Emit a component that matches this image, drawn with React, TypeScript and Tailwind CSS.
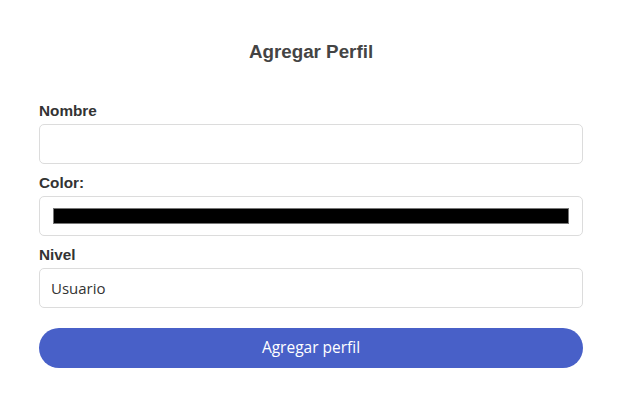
import { useState } from 'react';

export default function App() {
  const [nombre, setNombre] = useState('');

  return (
    <div className="min-h-screen bg-white font-['Liberation_Sans',Arial,sans-serif]">
      <form className="w-[544px] mx-auto pt-[41px]" onSubmit={(e) => e.preventDefault()}>
        <h2 className="text-center text-[18.8px] leading-[22px] font-bold text-[#444444] mb-[39px]">
          Agregar Perfil
        </h2>

        <label className="block text-[15.3px] leading-[18px] font-bold text-[#333333] mb-[4px]">Nombre</label>
        <input
          value={nombre}
          onChange={(e) => setNombre(e.target.value)}
          className="block w-full h-[40px] rounded-[5px] border border-[#dcdcdc] px-[11px] text-[15px] text-[#333] outline-none"
        />

        <label className="block mt-[10px] text-[15.3px] leading-[18px] font-bold text-[#333333] mb-[4px]">Color:</label>
        <div className="flex items-center w-full h-[40px] rounded-[5px] border border-[#dcdcdc] px-[13px]">
          <div className="w-full h-[16px] bg-black border border-[#777777]" />
        </div>

        <label className="block mt-[10px] text-[15.3px] leading-[18px] font-bold text-[#333333] mb-[4px]">Nivel</label>
        <div className="flex items-center w-full h-[40px] rounded-[5px] border border-[#dcdcdc] px-[11px] text-[15px] text-[#333333] font-['Open_Sans',sans-serif]">
          Usuario
        </div>

        <button
          type="submit"
          className="mt-[20px] w-full h-[40px] rounded-full bg-[#4860c8] text-white text-[15.5px] font-['Open_Sans',sans-serif]"
        >
          Agregar perfil
        </button>
      </form>
    </div>
  );
}
